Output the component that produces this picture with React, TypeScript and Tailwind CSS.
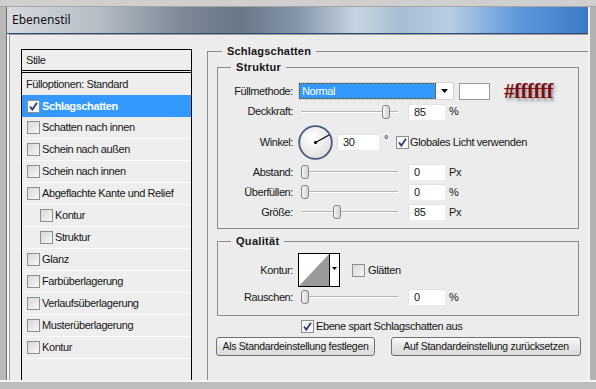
import React from "react";

const Box = ({ checked = false }: { checked?: boolean }) => (
  <span
    className={
      "w-[13px] h-[13px] border border-[#8e8f8f] flex items-center justify-center shrink-0 " +
      (checked ? "bg-[#f8f8f8]" : "bg-[linear-gradient(135deg,#d8d8d8,#f6f6f6)]")
    }
  >
    {checked && (
      <svg width="11" height="11" viewBox="0 0 11 11">
        <path d="M2 5.5 L4.3 8.6 L9 1.8" stroke="#2f3f78" strokeWidth="1.8" fill="none" />
      </svg>
    )}
  </span>
);

const Slider = ({ p }: { p: number }) => (
  <div className="relative w-[104px] h-[16px] shrink-0">
    <div className="absolute left-[3px] right-[4px] top-[7px] h-[2px] border-t border-[#b4b4b4] border-b border-b-white" />
    <div
      className="absolute top-[1px] w-[8px] h-[14px] rounded-[3px] border border-[#858585] bg-[linear-gradient(90deg,#f6f6f6,#d2d2d2)]"
      style={{ left: 3 + p * 95 }}
    />
  </div>
);

const Field = ({ v, w = "w-[37px]" }: { v: string; w?: string }) => (
  <div className={"h-[16px] bg-white border-t border-l border-[#e2e2e2] pl-[5px] leading-[15px] shrink-0 " + w}>{v}</div>
);

const Label = ({ t }: { t: string }) => <div className="w-[75px] mr-[5px] text-right shrink-0">{t}</div>;

const listItems = [
  { t: "Schatten nach innen" },
  { t: "Schein nach außen" },
  { t: "Schein nach innen" },
  { t: "Abgeflachte Kante und Relief" },
  { t: "Kontur", indent: true },
  { t: "Struktur", indent: true },
  { t: "Glanz" },
  { t: "Farbüberlagerung" },
  { t: "Verlaufsüberlagerung" },
  { t: "Musterüberlagerung" },
  { t: "Kontur" },
];

export default function App() {
  return (
    <div className="w-[596px] h-[389px] bg-[#b5b5b5] flex flex-col overflow-hidden font-['Liberation_Sans',Arial,sans-serif] text-[11px] tracking-[-0.4px] text-[#161616]">
      <div className="h-[7px] bg-[#cfcfcf] border-b border-[#a5a5a5] shrink-0" />
      <div className="flex flex-1 min-h-0">
        <div className="w-[7px] bg-[#b8b8b8] border-r border-[#6f6f6f] shrink-0" />
        <div className="w-[581px] flex flex-col shrink-0">
          <div className="h-[27px] shrink-0 border-b border-[#2c4d7c] bg-[linear-gradient(90deg,#d7dadf_0%,#b4bcc5_16%,#7d8997_30%,#6a7787_40%,#8496aa_50%,#c6d4e1_60%,#a7bdd3_68%,#b9cee3_76%,#5d98dc_88%,#3d7ac6_100%)] flex items-center pl-[5px] text-[12px] tracking-normal font-['Noto_Sans',sans-serif] text-[#101010]">
            Ebenenstil
          </div>
          <div className="flex-1 flex bg-[#ececec] border-l-[2px] border-[#f6f6f6]">
            <div className="flex-1 flex border-l border-t border-[#9c9c9c]">
              {/* style list */}
              <div className="w-[171px] ml-[11px] mt-[14px] border border-b-0 border-black bg-[#eeeeee] flex flex-col shrink-0">
                <div className="h-[20px] flex items-center pl-[4px]">Stile</div>
                <div className="h-[3px] border-y border-black" />
                <div className="h-[22px] flex items-center pl-[4px]">Fülloptionen: Standard</div>
                <div className="h-[22px] flex items-center pl-[5px] gap-[2px] bg-[#3399ff] text-white font-bold">
                  <Box checked />
                  <span>Schlagschatten</span>
                </div>
                {listItems.map((it, i) => (
                  <div
                    key={i}
                    className={
                      "h-[22px] flex items-center gap-[2px] border-b border-[#fbfbfb] " +
                      (it.indent ? "pl-[18px]" : "pl-[5px]")
                    }
                  >
                    <Box />
                    <span>{it.t}</span>
                  </div>
                ))}
              </div>

              {/* settings */}
              <fieldset className="flex-1 ml-[15px] mt-[9px] border-t border-l border-[#8c8c8c] min-w-0">
                <legend className="ml-[14px] px-[5px] font-bold leading-[14px] tracking-[0.2px]">Schlagschatten</legend>

                <fieldset className="ml-[9px] mt-[2px] w-[362px] h-[169px] border border-[#8c8c8c]">
                  <legend className="ml-[13px] px-[5px] font-bold leading-[14px] tracking-[0.3px]">Struktur</legend>
                  <div className="flex flex-col pt-[7px]">
                    <div className="h-[20px] flex items-center">
                      <Label t="Füllmethode:" />
                      <div className="w-[156px] h-[18px] flex border border-[#d4d4d4] bg-white shrink-0">
                        <div className="flex-1 bg-[#3399ff] text-white border border-dotted border-[#7a4a00] pl-[2px] leading-[14px]">
                          Normal
                        </div>
                        <div className="w-[17px] flex items-center justify-center">
                          <svg width="7" height="4" viewBox="0 0 7 4">
                            <path d="M0 0 H7 L3.5 4 Z" fill="#000" />
                          </svg>
                        </div>
                      </div>
                      <div className="ml-[5px] w-[31px] h-[17px] bg-white border border-[#9a9a9a] shrink-0" />
                      <div className="ml-[14px] font-['Liberation_Serif',serif] font-bold text-[21px] leading-[20px] tracking-[-0.5px] text-[#7a0c14] [text-shadow:2px_3px_3px_rgba(90,90,90,0.55)]">
                        #ffffff
                      </div>
                    </div>
                    <div className="h-[21px] flex items-center">
                      <Label t="Deckkraft:" />
                      <Slider p={0.85} />
                      <div className="ml-[6px]">
                        <Field v="85" />
                      </div>
                      <span className="ml-[4px]">%</span>
                    </div>
                    <div className="h-[40px] flex items-center">
                      <Label t="Winkel:" />
                      <svg width="35" height="35" viewBox="0 0 35 35" className="shrink-0">
                        <defs>
                          <radialGradient id="dial" cx="40%" cy="35%" r="70%">
                            <stop offset="0%" stopColor="#ffffff" />
                            <stop offset="100%" stopColor="#dedede" />
                          </radialGradient>
                        </defs>
                        <circle cx="17.5" cy="17.5" r="16.3" fill="url(#dial)" stroke="#4b5a82" strokeWidth="1.8" />
                        <line x1="17.5" y1="17.5" x2="31" y2="10" stroke="#000" strokeWidth="1.2" />
                        <circle cx="17.5" cy="17.5" r="1.6" fill="#000" />
                      </svg>
                      <div className="ml-[4px]">
                        <Field v="30" w="w-[42px]" />
                      </div>
                      <span className="ml-[5px] -mt-[6px]">°</span>
                      <span className="ml-[8px] flex items-center gap-[1px]">
                        <Box checked />
                        <span>Globales Licht verwenden</span>
                      </span>
                    </div>
                    <div className="h-[20px] flex items-center">
                      <Label t="Abstand:" />
                      <Slider p={0} />
                      <div className="ml-[6px]">
                        <Field v="0" />
                      </div>
                      <span className="ml-[4px]">Px</span>
                    </div>
                    <div className="h-[20px] flex items-center">
                      <Label t="Überfüllen:" />
                      <Slider p={0} />
                      <div className="ml-[6px]">
                        <Field v="0" />
                      </div>
                      <span className="ml-[4px]">%</span>
                    </div>
                    <div className="h-[20px] flex items-center">
                      <Label t="Größe:" />
                      <Slider p={0.34} />
                      <div className="ml-[6px]">
                        <Field v="85" />
                      </div>
                      <span className="ml-[4px]">Px</span>
                    </div>
                  </div>
                </fieldset>

                <fieldset className="ml-[9px] mt-[5px] w-[362px] h-[82px] border border-[#8c8c8c]">
                  <legend className="ml-[13px] px-[5px] font-bold leading-[14px] tracking-[0.3px]">Qualität</legend>
                  <div className="flex flex-col pt-[5px]">
                    <div className="h-[34px] flex items-center">
                      <Label t="Kontur:" />
                      <div className="w-[42px] h-[34px] border border-black flex bg-white shrink-0">
                        <svg width="30" height="32" viewBox="0 0 30 32">
                          <path d="M0 32 L30 0 L30 32 Z" fill="#9a9a9a" />
                        </svg>
                        <div className="flex-1 border-l border-black flex justify-center pt-[13px]">
                          <svg width="5" height="3" viewBox="0 0 5 3">
                            <path d="M0 0 H5 L2.5 3 Z" fill="#000" />
                          </svg>
                        </div>
                      </div>
                      <span className="ml-[12px] flex items-center gap-[3px]">
                        <Box />
                        <span>Glätten</span>
                      </span>
                    </div>
                    <div className="h-[20px] flex items-center">
                      <Label t="Rauschen:" />
                      <Slider p={0} />
                      <div className="ml-[6px]">
                        <Field v="0" />
                      </div>
                      <span className="ml-[4px]">%</span>
                    </div>
                  </div>
                </fieldset>

                <div className="ml-[93px] mt-[3px] h-[14px] flex items-center gap-[2px]">
                  <Box checked />
                  <span>Ebene spart Schlagschatten aus</span>
                </div>

                <div className="ml-[8px] mt-[4px] flex gap-[16px] text-[10.5px] tracking-[-0.3px]">
                  <button className="w-[159px] h-[19px] rounded-[3px] border border-[#707070] bg-[linear-gradient(180deg,#fbfbfb,#e6e6e6_50%,#dadada)] leading-[15px]">
                    Als Standardeinstellung festlegen
                  </button>
                  <button className="w-[190px] h-[19px] rounded-[3px] border border-[#707070] bg-[linear-gradient(180deg,#fbfbfb,#e6e6e6_50%,#dadada)] leading-[15px]">
                    Auf Standardeinstellung zurücksetzen
                  </button>
                </div>
              </fieldset>
            </div>
          </div>
        </div>
        <div className="w-[8px] bg-[#b2b2b2] border-l-[2px] border-[#f2f2f2] shrink-0" />
      </div>
      <div className="h-[9px] bg-[#bdbdbd] border-t-[2px] border-[#f4f4f4] shrink-0" />
    </div>
  );
}
